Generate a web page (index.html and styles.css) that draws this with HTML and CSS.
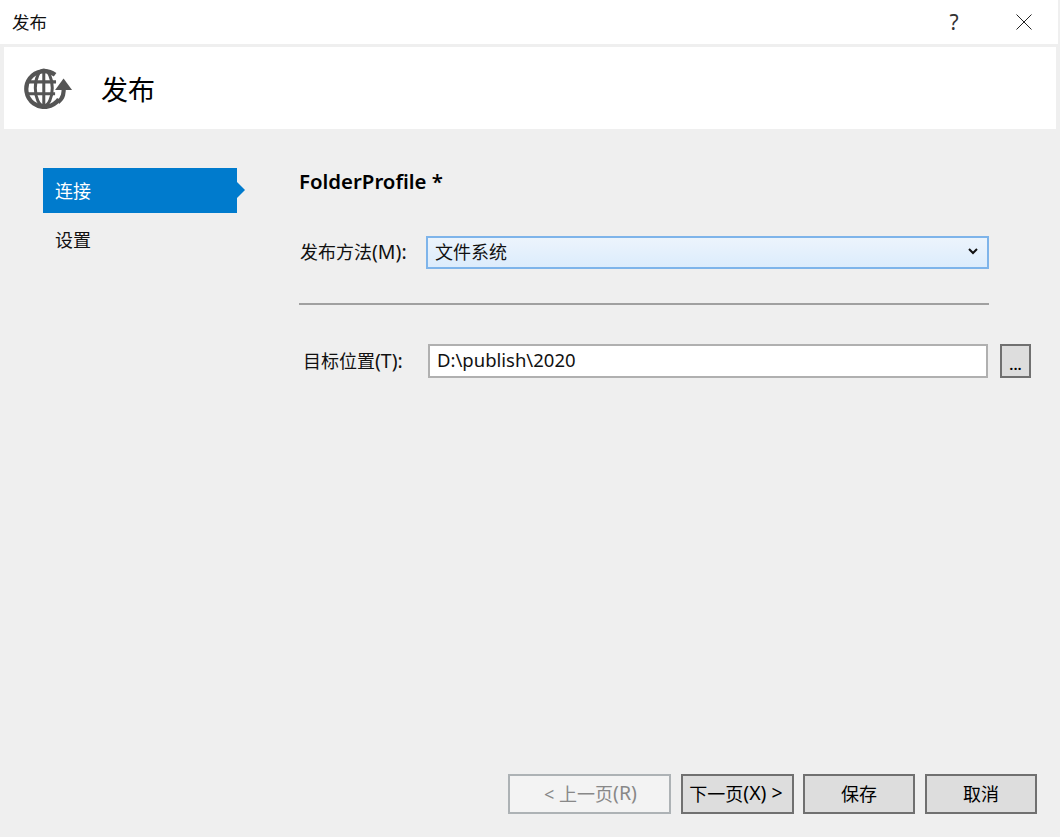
FILE: index.html
```html
<!DOCTYPE html>
<html lang="zh-CN">
<head>
<meta charset="utf-8">
<title>发布</title>
<link rel="stylesheet" href="styles.css">
</head>
<body>
<div class="window">
  <div class="titlebar">
    <span class="title-text">发布</span>
    <span class="help">?</span>
    <svg class="close" width="16" height="16" viewBox="0 0 16 16"><path d="M0.5 0.5L15.5 15.5M15.5 0.5L0.5 15.5" stroke="#222" stroke-width="1" fill="none"/></svg>
  </div>
  <div class="header">
    <svg class="globe" width="49" height="42" viewBox="0 0 52 44">
      <g fill="none" stroke="#555">
        <path d="M37 34A19 19 0 1 1 33 8" stroke-width="4.500"/>
        <ellipse cx="21" cy="22" rx="9" ry="19" stroke-width="3.200"/>
        <path d="M3 15.500H34M3 28H33M21 3V41" stroke-width="3.200"/>
        <path d="M36 37C42 33 42.500 27 42 19" stroke-width="4.500"/>
      </g>
      <path d="M33 24L42 12L51 24Z" fill="#555"/>
    </svg>
    <h1 class="header-text">发布</h1>
  </div>
  <div class="main">
    <nav class="sidebar">
      <div class="nav-item active">连接</div>
      <div class="nav-item">设置</div>
    </nav>
    <div class="content">
      <h2 class="profile">FolderProfile *</h2>
      <div class="row row-method">
        <span class="label label-method">发布方法<span class="latin">(M):</span></span>
        <div class="select">
          <span>文件系统</span>
          <svg width="10" height="7" viewBox="0 0 10 7"><path d="M1 1L5 5L9 1" stroke="#111" stroke-width="2" fill="none"/></svg>
        </div>
      </div>
      <div class="divider"></div>
      <div class="row row-target">
        <span class="label label-target">目标位置<span class="latin">(T):</span></span>
        <div class="input">D:\publish\2020</div>
        <div class="btn browse">...</div>
      </div>
    </div>
  </div>
  <div class="footer">
    <div class="btn btn-back">&lt; 上一页<span class="latin">(R)</span></div>
    <div class="btn btn-next">下一页<span class="latin">(X) &gt;</span></div>
    <div class="btn btn-save">保存</div>
    <div class="btn btn-cancel">取消</div>
  </div>
</div>
</body>
</html>
```
FILE: styles.css
```css
* { box-sizing: border-box; }
html, body { margin: 0; height: 100%; }
body {
  background: #efefef;
  font-family: "Noto Sans", "Noto Sans CJK SC", sans-serif;
  color: #111;
  font-size: 18px;
  overflow: hidden;
}
.latin { font-size: 19.5px; }
.window { width: 1060px; height: 837px; display: flex; flex-direction: column; }
.titlebar {
  height: 44px;
  background: #fff;
  margin-right: 2px;
  display: flex;
  align-items: center;
  padding-left: 12px;
}
.title-text { font-size: 17.500px; line-height: 44px; }
.help { margin-left: auto; font-size: 21px; color: #333; width: 16px; text-align: center; margin-right: 54px; }
.close { margin-right: 26px; }
.header {
  margin: 3px 4px 0;
  height: 82px;
  background: #fff;
  display: flex;
  align-items: center;
  padding-left: 20px;
}
.globe { filter: blur(0.6px); }
.header-text { margin: 2px 0 0 28px; font-size: 27px; font-weight: 400; line-height: 1; color: #000; }
.main { flex: 1; display: flex; padding: 39px 0 0 43px; }
.sidebar { width: 256px; }
.nav-item { width: 194px; height: 45px; line-height: 47px; padding-left: 12px; margin-bottom: 4px; position: relative; }
.nav-item.active { background: #007bcd; color: #fff; }
.nav-item.active::after {
  content: "";
  position: absolute;
  left: 100%;
  top: 14px;
  border-left: 8px solid #007bcd;
  border-top: 8px solid transparent;
  border-bottom: 8px solid transparent;
}
.content { flex: 1; }
.profile { margin: 0; font-size: 20.400px; font-weight: 600; color: #000; line-height: 26px; }
.row { display: flex; align-items: center; }
.row-method { margin-top: 42px; padding-left: 1px; width: 690px; }
.label { white-space: nowrap; padding-bottom: 3px; }
.label-method { width: 126px; }
.label-target { width: 125px; padding-bottom: 2px; }
.select {
  flex: 1;
  height: 33px;
  border: 2px solid #7eb4ea;
  background: linear-gradient(#ecf4fc, #dcecfc);
  display: flex;
  align-items: center;
  justify-content: space-between;
  padding: 0 9px 3px 7px;
}
.divider { width: 690px; height: 2px; background: #a0a0a0; margin-top: 34px; }
.row-target { margin-top: 39px; padding-left: 4px; }
.input {
  width: 560px;
  height: 34px;
  border: 2px solid #b0b0b0;
  background: #fff;
  line-height: 28px;
  padding-left: 7px;
  font-size: 18.500px;
}
.btn {
  height: 40px;
  border: 2px solid #707070;
  background: #ddd;
  display: flex;
  align-items: center;
  justify-content: center;
  white-space: pre;
  color: #000;
  padding-bottom: 3px;
}
.browse { width: 31px; height: 34px; margin-left: 12px; font-size: 15px; padding: 5px 0 0; font-weight: 600; }
.footer { display: flex; padding: 0 23px 23px 508px; }
.btn-back { width: 163px; background: #f3f3f3; border-color: #adb2b5; color: #888; padding-left: 2px; }
.btn-next { width: 113px; margin-left: 10px; padding-right: 3px; }
.btn-save { width: 112px; margin-left: 9px; }
.btn-cancel { width: 112px; margin-left: 10px; }
```
